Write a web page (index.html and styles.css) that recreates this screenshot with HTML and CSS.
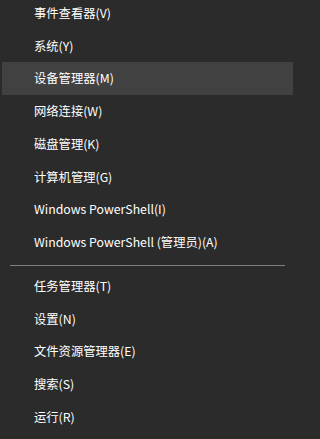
FILE: index.html
```html
<!DOCTYPE html>
<html lang="zh-CN">
<head>
<meta charset="utf-8">
<title>Win+X 菜单</title>
<link rel="stylesheet" href="styles.css">
</head>
<body>
<div class="menu">
  <ul class="group">
    <li class="item">事件查看器(V)</li>
    <li class="item">系统(Y)</li>
    <li class="item active">设备管理器(M)</li>
    <li class="item">网络连接(W)</li>
    <li class="item">磁盘管理(K)</li>
    <li class="item">计算机管理(G)</li>
    <li class="item">Windows PowerShell(I)</li>
    <li class="item">Windows PowerShell (管理员)(A)</li>
  </ul>
  <div class="sep"></div>
  <ul class="group">
    <li class="item">任务管理器(T)</li>
    <li class="item">设置(N)</li>
    <li class="item">文件资源管理器(E)</li>
    <li class="item">搜索(S)</li>
    <li class="item">运行(R)</li>
  </ul>
  <div class="sep"></div>
</div>
</body>
</html>
```

FILE: styles.css
```css
html, body {
  margin: 0;
  padding: 0;
  background: #2b2b2b;
  height: 100%;
  overflow: hidden;
}

.menu {
  width: 295px;
  box-sizing: border-box;
  margin-top: -3.5px;
  padding: 0 2px;
  font-family: "Noto Sans CJK SC", "Noto Sans", sans-serif;
  font-size: 12.3px;
  color: #ffffff;
}

.group {
  list-style: none;
  margin: 0;
  padding: 0;
}

.item {
  height: 32.75px;
  display: flex;
  align-items: center;
  padding-left: 32px;
  white-space: nowrap;
}

.item.active {
  background: #414141;
}

.sep {
  height: 1px;
  background: #7f7f7f;
  margin: 6px 8px 4px 8px;
}
```
